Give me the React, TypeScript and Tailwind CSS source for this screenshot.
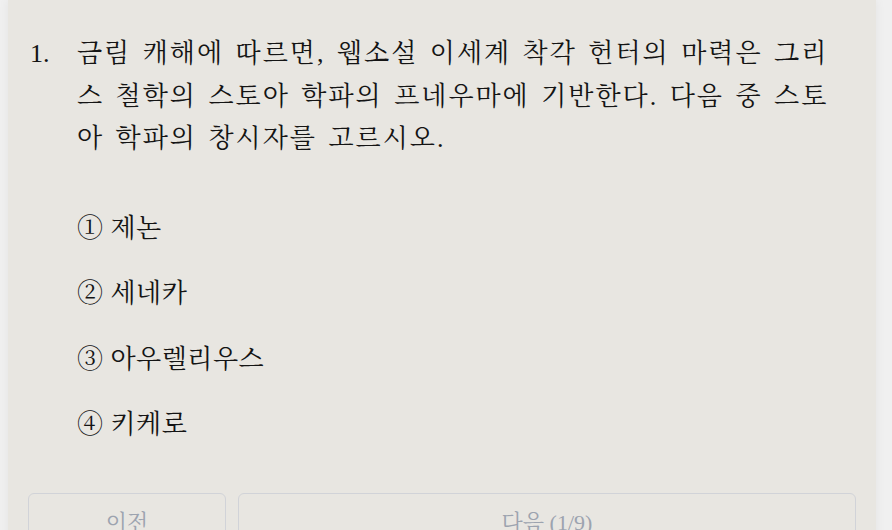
import React from "react";

const options = ["① 제논", "② 세네카", "③ 아우렐리우스", "④ 키케로"];

export default function App() {
  return (
    <div className="min-h-screen bg-[#f0f0f0] pl-2 pr-4 [font-family:'Liberation_Serif','Noto_Serif_CJK_KR','Noto_Sans_CJK_KR',serif]">
      <div className="min-h-screen bg-[#e8e6e1] px-5 pt-[33px] shadow-[0_0_10px_rgba(0,0,0,0.06)]">
        <div className="flex text-[26px] leading-[42.5px] tracking-[2px] text-[#141414] [word-spacing:3px]">
          <span className="w-[49px] shrink-0 pl-[2px] tracking-normal">1.</span>
          <p className="min-w-0 flex-1 pr-6">
            금림 캐해에 따르면, 웹소설 이세계 착각 헌터의 마력은 그리스 철학의 스토아 학파의 프네우마에 기반한다. 다음 중 스토아 학파의 창시자를 고르시오.
          </p>
        </div>

        <ul className="mt-[48px] ml-[49px] flex flex-col gap-[25.5px] text-[26px] leading-[40px] tracking-[0.5px] text-[#141414]">
          {options.map((o) => (
            <li key={o}>{o}</li>
          ))}
        </ul>

        <div className="mt-[48px] flex gap-3 pb-5">
          <button className="h-[58px] w-[198px] rounded-md border border-[#d1d3d8] text-[22px] text-[#9ca3af]">
            이전
          </button>
          <button className="h-[58px] flex-1 rounded-md border border-[#d1d3d8] text-[22px] text-[#9ca3af]">
            다음 (1/9)
          </button>
        </div>
      </div>
    </div>
  );
}
